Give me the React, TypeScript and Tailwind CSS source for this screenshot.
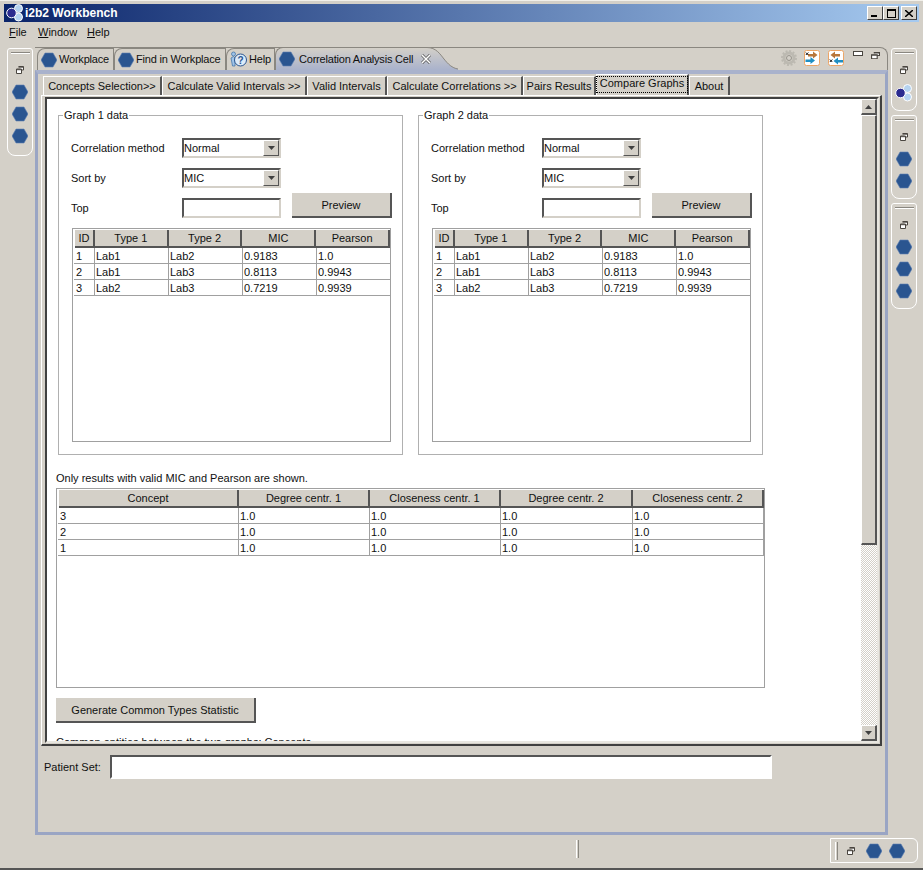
import type { ReactNode } from "react";

const FONT = "font-['Liberation_Sans',Arial,sans-serif]";

function Hex() {
  return (
    <svg width="16" height="16" viewBox="0 0 16 16" className="shrink-0">
      <polygon points="4,1 12,1 16,8 12,15 4,15 0,8" fill="#2a5590" stroke="#5f82b4" strokeWidth="0.6" />
    </svg>
  );
}

function RestoreIcon({ large }: { large?: boolean }) {
  return (
    <svg width={large ? 9 : 8} height={large ? 7 : 8} viewBox="0 0 8 8" preserveAspectRatio="none" className="shrink-0">
      <path d="M2.500 .5h5v3.500h-2M.5 3h5v4.500h-5z" fill="#fff" stroke="#4a4640" />
      <path d="M2.500 1.200h5M.5 3.700h5" stroke="#4a4640" />
    </svg>
  );
}

function HelpIcon() {
  return (
    <svg width="17" height="17" viewBox="0 0 17 17" className="shrink-0">
      <circle cx="3.500" cy="3" r="2" fill="#9fc3e8" stroke="#3a6ea5" strokeWidth="0.7" />
      <path d="M1 7l2.500-1.500L5 7v8H2.500z" fill="#9fc3e8" stroke="#3a6ea5" strokeWidth="0.7" />
      <circle cx="10.500" cy="9" r="6" fill="#dcebf9" stroke="#2a5590" />
      <text x="10.500" y="12.500" fontSize="10" fontWeight="700" textAnchor="middle" fill="#2a5590" fontFamily="Liberation Sans">?</text>
    </svg>
  );
}

function I2b2Logo() {
  return (
    <svg width="18" height="18" viewBox="0 0 18 18" className="shrink-0">
      <circle cx="12.500" cy="4.500" r="4" fill="#b5d3f0" stroke="#fff" />
      <circle cx="12.500" cy="13" r="4" fill="#b5d3f0" stroke="#fff" />
      <circle cx="5.500" cy="9" r="4.800" fill="#2b2b8f" stroke="#fff" />
    </svg>
  );
}

function SwapIcon({ back }: { back?: boolean }) {
  return (
    <svg width="16" height="16" viewBox="0 0 16 16" className="shrink-0">
      <rect x=".5" y=".5" width="15" height="15" rx="2" fill="#fff" stroke="#eca668" />
      {back ? (
        <>
          <path d="M12 4H7V1.500L2.500 5 7 8.500V6.500h5z" fill="#b8763a" />
          <path d="M15 10H10V7.500L5.500 11 10 14.500V12.500h5z" fill="#1f8fc4" />
          <path d="M1.800 9.500l2.500 2.500M4.300 9.500l-2.500 2.500" stroke="#111" />
        </>
      ) : (
        <>
          <path d="M4 4h5V1.500L13.500 5 9 8.500V6.500H4z" fill="#b8763a" />
          <path d="M1.500 9.500h5V7L11 10.500 6.500 14v-2h-5z" fill="#1f8fc4" />
          <path d="M1.800 2.500l2.500 2.500M4.300 2.500l-2.500 2.500" stroke="#111" />
        </>
      )}
    </svg>
  );
}

function GearIcon() {
  return (
    <svg width="16" height="16" viewBox="0 0 16 16" className="shrink-0">
      <circle cx="8" cy="8" r="5" fill="none" stroke="#bcb9b1" strokeWidth="3" />
      <circle cx="8" cy="8" r="7" fill="none" stroke="#bcb9b1" strokeWidth="2" strokeDasharray="2 1.660" />
      <circle cx="8" cy="8" r="2.500" fill="none" stroke="#96938c" />
    </svg>
  );
}

function Arrow({ down = true }: { down?: boolean }) {
  return (
    <svg width="7" height="4" viewBox="0 0 7 4">
      <polygon points={down ? "0,0 7,0 3.500,4" : "3.500,0 7,4 0,4"} fill="#404040" />
    </svg>
  );
}

function Combo({ value }: { value: string }) {
  return (
    <div className="flex h-[20px] w-[99px] items-center justify-between border-2 border-t-[#555] border-r-[#d4d0c8] border-b-[#d4d0c8] border-l-[#555] bg-white">
      <span>{value}</span>
      <span className="flex h-[16px] w-[16px] items-center justify-center border-t border-r border-b border-l border-t-white border-r-[#555] border-b-[#555] border-l-white bg-[#d4d0c8]">
        <Arrow />
      </span>
    </div>
  );
}

function Button({ className, children }: { className: string; children: ReactNode }) {
  return (
    <div className={`flex items-center justify-center border-r-2 border-b-2 border-r-[#555] border-b-[#555] bg-[#d4d0c8] pt-[1px] ${className}`}>
      {children}
    </div>
  );
}

function DataTable({
  columns,
  rows,
  className,
}: {
  columns: { label: string; width: string }[];
  rows: string[][];
  className: string;
}) {
  return (
    <div className={`border border-[#a0a0a0] bg-white pt-[1px] pl-[1px] ${className}`}>
      <div className="flex h-[18px] pl-[1px]">
        {columns.map((c) => (
          <div
            key={c.label}
            className={`flex items-center justify-center border-r-2 border-b-2 border-r-[#555] border-b-[#555] bg-[#d4d0c8] pt-[1px] ${c.width}`}
          >
            {c.label}
          </div>
        ))}
      </div>
      {rows.map((row) => (
        <div key={row.join()} className="flex h-[16px] w-fit border-b border-b-[#a0a0a0] pl-[1px]">
          {row.map((cell, i) => (
            <div key={i} className={`flex items-center border-r border-r-[#a0a0a0] pt-[1px] pl-[1px] ${columns[i].width}`}>
              {cell}
            </div>
          ))}
        </div>
      ))}
    </div>
  );
}

const GRAPH_COLUMNS = [
  { label: "ID", width: "w-[20px]" },
  { label: "Type 1", width: "w-[74px]" },
  { label: "Type 2", width: "w-[74px]" },
  { label: "MIC", width: "w-[74px]" },
  { label: "Pearson", width: "w-[74px]" },
];

const GRAPH_ROWS = [
  ["1", "Lab1", "Lab2", "0.9183", "1.0"],
  ["2", "Lab1", "Lab3", "0.8113", "0.9943"],
  ["3", "Lab2", "Lab3", "0.7219", "0.9939"],
];

const COMMON_COLUMNS = [
  { label: "Concept", width: "w-[180px]" },
  { label: "Degree centr. 1", width: "w-[131px]" },
  { label: "Closeness centr. 1", width: "w-[131px]" },
  { label: "Degree centr. 2", width: "w-[132px]" },
  { label: "Closeness centr. 2", width: "w-[131px]" },
];

const COMMON_ROWS = [
  ["3", "1.0", "1.0", "1.0", "1.0"],
  ["2", "1.0", "1.0", "1.0", "1.0"],
  ["1", "1.0", "1.0", "1.0", "1.0"],
];

function GraphGroup({ title }: { title: string }) {
  return (
    <fieldset className="h-[346px] w-[345px] shrink-0 border border-[#b0b0b0] pr-[10px] pl-[12px]">
      <legend className="-ml-[8px] px-[1px] leading-[13px]">{title}</legend>
      <div className="mt-[16px] flex h-[20px] items-center">
        <span className="w-[111px]">Correlation method</span>
        <Combo value="Normal" />
      </div>
      <div className="mt-[10px] flex h-[20px] items-center">
        <span className="w-[111px]">Sort by</span>
        <Combo value="MIC" />
      </div>
      <div className="mt-[5px] flex h-[25px] items-center">
        <span className="w-[111px] pt-[5px]">Top</span>
        <div className="mt-[5px] h-[20px] w-[99px] border-2 border-t-[#555] border-r-[#d4d0c8] border-b-[#d4d0c8] border-l-[#555]" />
        <Button className="ml-[11px] h-[25px] w-[100px]">Preview</Button>
      </div>
      <DataTable columns={GRAPH_COLUMNS} rows={GRAPH_ROWS} className="mt-[10px] ml-[1px] h-[214px] w-[319px]" />
    </fieldset>
  );
}

function TopTab({ icon, label, className }: { icon: ReactNode; label: string; className: string }) {
  return (
    <div className={`flex h-[22px] items-center gap-[2px] rounded-tl-[8px] border-t border-r border-l border-[#8a8780] pl-[3px] tracking-[-0.2px] whitespace-nowrap ${className}`}>
      {icon}
      <span>{label}</span>
    </div>
  );
}

function InnerTab({ label, width, active }: { label: string; width: string; active?: boolean }) {
  if (active) {
    return (
      <div className={`flex h-[21px] items-start justify-center border-t border-l border-r-2 border-t-white border-r-[#555] border-l-white bg-[#d4d0c8] pt-[1px] whitespace-nowrap ${width}`}>
        <span className="border border-dotted border-black px-[3px] pb-[2px] leading-[13px]">{label}</span>
      </div>
    );
  }
  return (
    <div className={`flex h-[19px] items-center justify-center border-t border-l border-r-2 border-t-white border-r-[#555] border-l-white bg-[#d4d0c8] whitespace-nowrap ${width}`}>
      {label}
    </div>
  );
}

function Trim({ height, children }: { height: string; children: ReactNode }) {
  return (
    <div className={`flex w-[26px] flex-col items-center rounded-t-[3px] rounded-b-[8px] border border-white ${height}`}>
      <div className="mt-[3px] h-[2px] w-[19px] border-t border-b border-t-[#8a8780] border-b-white" />
      <div className="mt-[12px] mb-[10px] flex h-[8px] items-center">
        <RestoreIcon />
      </div>
      <div className="flex flex-col items-center gap-[6px]">{children}</div>
    </div>
  );
}

function ScrollButton({ down }: { down?: boolean }) {
  return (
    <div className="flex h-[16px] shrink-0 items-center justify-center border-t border-r-2 border-b-2 border-l border-t-white border-r-[#555] border-b-[#555] border-l-white bg-[#d4d0c8]">
      <Arrow down={down} />
    </div>
  );
}

export default function App() {
  return (
    <div className={`flex h-[870px] w-[923px] flex-col overflow-hidden border-t border-t-[#f2f0ea] bg-[#d4d0c8] text-[11px] leading-[13px] text-[#101010] ${FONT}`}>
      {/* title bar */}
      <div className="mx-[4px] mt-[3px] flex h-[18px] shrink-0 items-center bg-[linear-gradient(to_right,#0a246a,#a6caf0)] px-[2px]">
        <I2b2Logo />
        <span className="ml-[1px] text-[12px] font-bold text-white">i2b2 Workbench</span>
        <div className="ml-auto flex">
          <div className="flex h-[14px] w-[16px] items-end justify-start border-t border-r border-b border-l border-t-white border-r-[#404040] border-b-[#404040] border-l-white bg-[#d4d0c8] pb-[2px] pl-[3px]">
            <div className="h-[2px] w-[6px] bg-black" />
          </div>
          <div className="flex h-[14px] w-[16px] items-center justify-center border-t border-r border-b border-l border-t-white border-r-[#404040] border-b-[#404040] border-l-white bg-[#d4d0c8]">
            <div className="h-[9px] w-[9px] border border-t-2 border-black" />
          </div>
          <div className="ml-[2px] flex h-[14px] w-[16px] items-center justify-center border-t border-r border-b border-l border-t-white border-r-[#404040] border-b-[#404040] border-l-white bg-[#d4d0c8]">
            <svg width="8" height="7" viewBox="0 0 8 7"><path d="M0 0l8 7M8 0L0 7" stroke="#000" strokeWidth="1.500" /></svg>
          </div>
        </div>
      </div>

      {/* menu */}
      <div className="flex h-[20px] shrink-0 items-center pl-[9px]">
        <span className="w-[29px]"><u>F</u>ile</span>
        <span className="w-[49px]"><u>W</u>indow</span>
        <span><u>H</u>elp</span>
      </div>

      <div className="flex h-[796px] shrink-0 items-start pl-[7px]">
        {/* left trim */}
        <div className="mt-[6px]">
          <Trim height="h-[108px]">
            <Hex />
            <Hex />
            <Hex />
          </Trim>
        </div>

        {/* main editor area */}
        <div className="mt-[5px] ml-[2px] w-[853px] shrink-0">
          <div className="flex h-[23px] items-end rounded-tr-[8px] border-t border-r border-t-[#8a8780] border-r-[#8a8780] pl-[2px]">
            <TopTab icon={<Hex />} label="Workplace" className="w-[77px] shrink-0" />
            <TopTab icon={<Hex />} label="Find in Workplace" className="w-[112px] shrink-0" />
            <TopTab icon={<HelpIcon />} label="Help" className="w-[49px] shrink-0" />
            <div className="relative z-10 flex h-[23px] w-[150px] shrink-0 items-center gap-[4px] rounded-tl-[8px] border-t border-l border-[#8a8780] bg-[linear-gradient(to_bottom,#d4d0c8,#a9b2cc)] pl-[3px] tracking-[-0.2px] whitespace-nowrap">
              <Hex />
              <span>Correlation Analysis Cell</span>
              <svg width="10" height="10" viewBox="0 0 10 10" className="ml-[4px] shrink-0">
                <path d="M1 1l8 8M9 1L1 9" stroke="#5a5a5a" strokeWidth="3" />
                <path d="M1 1l8 8M9 1L1 9" stroke="#fff" strokeWidth="1.500" />
              </svg>
            </div>
            <svg width="33" height="23" viewBox="0 0 33 23" className="shrink-0">
              <defs>
                <linearGradient id="tail" x1="0" y1="0" x2="0" y2="1">
                  <stop offset="0" stopColor="#d4d0c8" />
                  <stop offset="1" stopColor="#a9b2cc" />
                </linearGradient>
              </defs>
              <path d="M0 0.500H2C11 0.500 15 7 19 12C23 17 27 21 33 22V23H0Z" fill="url(#tail)" />
              <path d="M0 0.500H2C11 0.500 15 7 19 12C23 17 27 21 33 22" fill="none" stroke="#8a8780" />
            </svg>
            <div className="ml-auto flex h-[22px] items-start pt-[2px] pr-[7px]">
              <GearIcon />
              <div className="ml-[7px]"><SwapIcon /></div>
              <div className="ml-[8px]"><SwapIcon back /></div>
              <div className="mt-[1px] ml-[9px] h-[5px] w-[10px] border border-[#4a4640] bg-white" />
              <div className="mt-[2px] ml-[8px]"><RestoreIcon large /></div>
            </div>
          </div>

          {/* blue framed view */}
          <div className="h-[765px] border-x-[3px] border-t-[4px] border-b-[3px] border-[#9aa5c4] border-t-[#a9b2cc]">
            <div className="flex h-[21px] items-end pl-[5px]">
              <InnerTab label="Concepts Selection>>" width="w-[119px]" />
              <InnerTab label="Calculate Valid Intervals >>" width="w-[145px]" />
              <InnerTab label="Valid Intervals" width="w-[80px]" />
              <InnerTab label="Calculate Correlations >>" width="w-[136px]" />
              <InnerTab label="Pairs Results" width="w-[73px]" />
              <InnerTab label="Compare Graphs" width="w-[93px]" active />
              <InnerTab label="About" width="w-[41px]" />
            </div>

            {/* tab folder */}
            <div className="mx-[3px] h-[651px] border-t border-r-2 border-b-2 border-l border-t-white border-r-[#404040] border-b-[#404040] border-l-white pt-[1px] pr-[1px] pb-[1px] pl-[3px]">
              <div className="flex h-full border-t-2 border-r-2 border-b-2 border-l-2 border-t-[#404040] border-r-[#e8e6e0] border-b-[#e8e6e0] border-l-[#404040] bg-white">
                <div className="min-w-0 flex-1 overflow-hidden">
                  <div className="flex gap-[15px] pt-[10px] pl-[11px]">
                    <GraphGroup title="Graph 1 data" />
                    <GraphGroup title="Graph 2 data" />
                  </div>
                  <p className="mt-[17px] ml-[9px]">Only results with valid MIC and Pearson are shown.</p>
                  <DataTable columns={COMMON_COLUMNS} rows={COMMON_ROWS} className="mt-[3px] ml-[9px] h-[200px] w-[709px]" />
                  <Button className="mt-[10px] ml-[9px] h-[25px] w-[200px]">Generate Common Types Statistic</Button>
                  <p className="mt-[13px] ml-[9px] whitespace-nowrap">Common entities between the two graphs: Concepts</p>
                </div>

                {/* scrollbar */}
                <div className="flex w-[16px] shrink-0 flex-col bg-[conic-gradient(#d4d0c8_25%,#fff_0_50%,#d4d0c8_0_75%,#fff_0)] bg-[length:2px_2px]">
                  <ScrollButton down={false} />
                  <div className="h-[430px] shrink-0 border-t border-r-2 border-b-2 border-l border-t-white border-r-[#555] border-b-[#555] border-l-white bg-[#d4d0c8]" />
                  <div className="flex-1" />
                  <ScrollButton />
                </div>
              </div>
            </div>

            {/* patient set */}
            <div className="mt-[9px] flex items-center pl-[6px]">
              <span className="w-[66px]">Patient Set:</span>
              <div className="h-[24px] w-[662px] border-2 border-t-[#555] border-r-white border-b-white border-l-[#555] bg-white" />
            </div>
          </div>
        </div>

        {/* right trims */}
        <div className="mt-[6px] ml-[3px] flex flex-col gap-[4px]">
          <Trim height="h-[63px]">
            <I2b2Logo />
          </Trim>
          <Trim height="h-[84px]">
            <Hex />
            <Hex />
          </Trim>
          <Trim height="h-[106px]">
            <Hex />
            <Hex />
            <Hex />
          </Trim>
        </div>
      </div>

      {/* status bar */}
      <div className="flex h-[32px] shrink-0 items-start border-b-2 border-b-[#555]">
        <div className="mt-[2px] ml-[576px] h-[18px] w-[3px] border-r border-l border-r-[#8a8780] border-l-white" />
        <div className="mr-[5px] ml-auto flex h-[25px] w-[88px] items-center rounded-r-[6px] border border-white pl-[4px]">
          <div className="h-[18px] w-[3px] border-r border-l border-r-[#8a8780] border-l-white" />
          <div className="mr-[11px] ml-[9px]"><RestoreIcon /></div>
          <div className="flex gap-[7px]">
            <Hex />
            <Hex />
          </div>
        </div>
      </div>
    </div>
  );
}
